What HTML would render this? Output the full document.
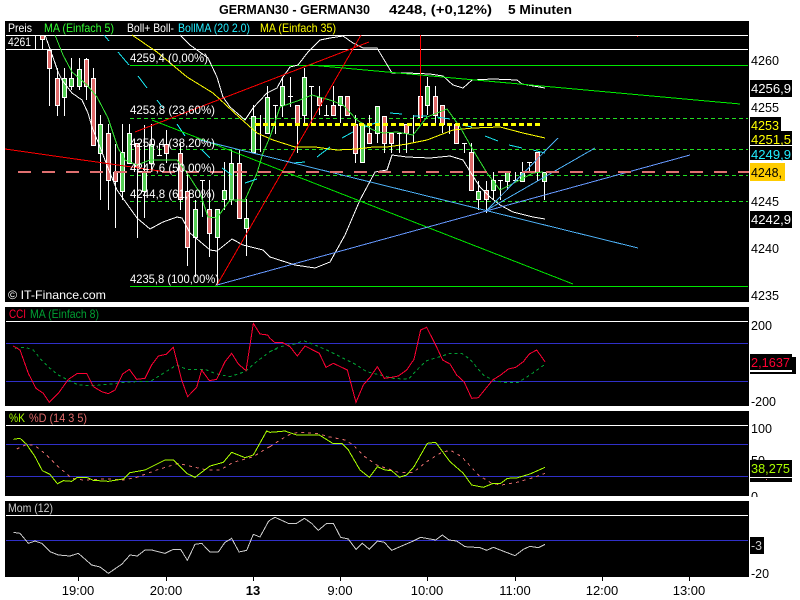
<!DOCTYPE html>
<html><head><meta charset="utf-8"><title>GERMAN30</title>
<style>
html,body{margin:0;padding:0;background:#fff;width:800px;height:600px;overflow:hidden}
svg{display:block}
text{font-family:"Liberation Sans",sans-serif;font-size:12px;white-space:pre}
polyline,path,line,rect{shape-rendering:crispEdges}
polyline{fill:none;vector-effect:non-scaling-stroke}
</style></head><body>
<svg width="800" height="600" viewBox="0 0 800 600" xmlns="http://www.w3.org/2000/svg">
<rect width="800" height="600" fill="#fff"/>
<text x="219" y="14" font-weight="bold" style="font-size:13px" textLength="151" lengthAdjust="spacingAndGlyphs">GERMAN30 - GERMAN30</text>
<text x="389" y="14" font-weight="bold" style="font-size:13px" textLength="103" lengthAdjust="spacingAndGlyphs">4248, (+0,12%)</text>
<text x="508" y="14" font-weight="bold" style="font-size:13px" textLength="64" lengthAdjust="spacingAndGlyphs">5 Minuten</text>

<!-- panels -->
<rect x="5" y="21" width="744" height="281" fill="#000"/>
<rect x="5" y="307" width="744" height="99" fill="#000"/>
<rect x="5" y="411" width="744" height="85" fill="#000"/>
<rect x="5" y="501" width="744" height="76" fill="#000"/>

<!-- main frame lines -->
<path d="M6 35.5H748M6 49.5H748M35.5 35V49M6 321.5H748M6 425.5H748M6 515.5H748" stroke="#fff" fill="none"/>
<path d="M6 343.5H748M6 381.5H748M6 444.5H748M6 476.5H748M6 540.5H748" stroke="#3030c8" fill="none"/>

<!-- fib lines -->
<path d="M130 65.5H748M130 286.5H748" stroke="#00e600" fill="none"/>
<path d="M130 118.5H748M130 149.5H748M130 175.5H748M130 201.5H748" stroke="#22dd22" stroke-dasharray="4 3" fill="none"/>

<!-- wicks -->
<path stroke="#fff" fill="none" d="M42.5 35V49M49.5 49V106M57.5 68V116M64.5 68V116M71.5 58V90M79.5 58V90M86.5 58V100M93.5 68V145M100.5 115V200M108.5 124V210M115.5 144V228M122.5 124V200M129.5 124V163M137.5 143V238M144.5 125V218M151.5 124V170M159.5 143V155M166.5 130V163M180.5 143V210M187.5 172V266M195.5 200V277M202.5 180V217M209.5 180V257M217.5 209V284M224.5 162V210M231.5 150V205M239.5 150V218M246.5 199V256M253.5 105V152M260.5 115V152M267.5 86V134M275.5 105V134M282.5 77V117M290.5 77V107M297.5 115V153M304.5 68V123M311.5 86V123M319.5 86V115M326.5 105V115M333.5 86V115M340.5 96V123M347.5 96V115M355.5 115V163M362.5 124V163M369.5 115V143M377.5 115V143M384.5 143V153M391.5 133V153M399.5 133V153M406.5 124V153M413.5 115V143M427.5 77V115M435.5 86V124M442.5 105V133M449.5 124V134M456.5 124V143M464.5 143V153M471.5 143V190M478.5 181V210M486.5 181V213M493.5 172V200M500.5 180V200M507.5 172V190M515.5 172V181M522.5 162V181M529.5 162V172M537.5 152V181M544.5 172V200
M157 155.5H162M200 180.5H205M273 105.5H278M288 96.5H293M309 86.5H314M324 115.5H329M397 133.5H402M447 124.5H452M462 143.5H467M498 180.5H503M513 180.5H518M527 162.5H532"/>
<!-- red bodies -->
<g fill="#e06a6a" stroke="#fff">
<rect x="40.5" y="35.5" width="4" height="4"/><rect x="47.5" y="50.5" width="4" height="18"/><rect x="55.5" y="78.5" width="4" height="27"/><rect x="84.5" y="59.5" width="4" height="27"/><rect x="91.5" y="78.5" width="4" height="67"/><rect x="106.5" y="133.5" width="4" height="47"/><rect x="113.5" y="172.5" width="4" height="9"/><rect x="135.5" y="143.5" width="4" height="24"/><rect x="164.5" y="144.5" width="4" height="9"/><rect x="178.5" y="153.5" width="4" height="46"/><rect x="185.5" y="191.5" width="4" height="56"/><rect x="207.5" y="209.5" width="4" height="24"/><rect x="237.5" y="163.5" width="4" height="55"/><rect x="295.5" y="105.5" width="4" height="18"/><rect x="317.5" y="97.5" width="4" height="8"/><rect x="331.5" y="105.5" width="4" height="10"/><rect x="345.5" y="96.5" width="4" height="19"/><rect x="353.5" y="124.5" width="4" height="29"/><rect x="367.5" y="133.5" width="4" height="10"/><rect x="382.5" y="116.5" width="4" height="27"/><rect x="389.5" y="133.5" width="4" height="10"/><rect x="404.5" y="124.5" width="4" height="9"/><rect x="418.5" y="96.5" width="4" height="21"/><rect x="433.5" y="96.5" width="4" height="19"/><rect x="440.5" y="105.5" width="4" height="19"/><rect x="454.5" y="124.5" width="4" height="19"/><rect x="469.5" y="152.5" width="4" height="38"/><rect x="484.5" y="190.5" width="4" height="9"/><rect x="535.5" y="152.5" width="4" height="20"/>
</g>
<!-- green bodies -->
<g fill="#55d055" stroke="#fff">
<rect x="62.5" y="78.5" width="4" height="19"/><rect x="69.5" y="78.5" width="4" height="8"/><rect x="77.5" y="69.5" width="4" height="17"/><rect x="98.5" y="124.5" width="4" height="29"/><rect x="120.5" y="152.5" width="4" height="39"/><rect x="127.5" y="133.5" width="4" height="30"/><rect x="142.5" y="172.5" width="4" height="19"/><rect x="149.5" y="144.5" width="4" height="19"/><rect x="193.5" y="209.5" width="4" height="28"/><rect x="215.5" y="209.5" width="4" height="28"/><rect x="222.5" y="190.5" width="4" height="9"/><rect x="229.5" y="163.5" width="4" height="36"/><rect x="244.5" y="218.5" width="4" height="10"/><rect x="251.5" y="116.5" width="4" height="36"/><rect x="265.5" y="97.5" width="4" height="36"/><rect x="280.5" y="86.5" width="4" height="19"/><rect x="302.5" y="77.5" width="4" height="38"/><rect x="338.5" y="96.5" width="4" height="9"/><rect x="360.5" y="124.5" width="4" height="38"/><rect x="375.5" y="106.5" width="4" height="27"/><rect x="425.5" y="86.5" width="4" height="19"/><rect x="476.5" y="191.5" width="4" height="8"/><rect x="491.5" y="180.5" width="4" height="10"/><rect x="505.5" y="172.5" width="4" height="9"/><rect x="520.5" y="172.5" width="4" height="9"/><rect x="542.5" y="172.5" width="4" height="9"/>
</g>

<!-- bollinger -->
<polyline stroke="#fff" points="180,35 190,45 208,58 217,77 223,97 230,107 245,120 253,108 267,93 277,88 283,77 290,67 298,65 308,52 320,40 330,38 343,36 353,43 363,48 377,48 383,58 392,73 407,73 430,74 443,76 453,85 463,88 472,80 493,79 517,80 522,84 545,88"/>
<polyline stroke="#fff" points="45,35 55,63 58,72 62,80 72,93 82,100 88,113 92,127 100,147 110,173 117,190 137,218 150,229 163,222 177,217 182,218 190,233 210,250 217,251 232,239 243,245 263,250 270,257 295,265 315,268 330,262 345,235 360,200 375,172 387,170 392,155 407,157 430,158 450,156 463,160 471,173 480,187 490,197 500,205 513,212 533,217 545,219"/>
<!-- MA 35 yellow -->
<polyline stroke="#ffff00" points="132,35 157,52 187,77 213,93 240,118 257,133 273,140 295,147 315,147 337,150 357,149 373,147 387,147 407,144 427,140 453,130 473,128 500,127 523,133 545,138"/>
<!-- MA 5 green -->
<polyline stroke="#33e633" points="55,35 63,55 72,72 87,85 97,97 108,118 118,148 125,160 137,165 150,160 165,160 177,160 187,173 200,193 208,217 217,218 230,200 245,200 257,173 263,153 270,137 280,107 300,100 312,95 330,100 343,105 357,120 373,130 383,133 397,132 413,135 427,117 447,109 460,127 473,150 487,173 500,190 520,180 533,173 543,172"/>
<!-- BollMA cyan dashes -->
<path stroke="#19e6f0" fill="none" d="M104 35L109 41M118 52L129 65M138 76L147 88M157 100L163 108M177 124L185 136M202 150L210 158M222 168L232 175M245 183L257 179M293 163L305 162M317 157L330 147M342 138L353 132M365 127L378 122M390 113L402 114M413 116L427 116M437 117L450 119M462 125L472 127M485 136L498 141M509 145L522 148M533 150L545 153"/>

<!-- trendlines -->
<line x1="217" y1="285" x2="361" y2="35" stroke="#ff0000"/>
<line x1="135" y1="132" x2="369" y2="42" stroke="#ff0000"/>
<line x1="5" y1="149" x2="167" y2="172" stroke="#ff0000"/>
<path d="M420.5 35V122" stroke="#ff0000" fill="none"/>
<rect x="637" y="36" width="1" height="1" fill="#ff0000"/>
<line x1="310" y1="65" x2="740" y2="104" stroke="#00f000"/>
<line x1="152" y1="120" x2="573" y2="284" stroke="#00e600"/>
<line x1="200" y1="140" x2="638" y2="248" stroke="#4db0f5"/>
<line x1="217" y1="285" x2="690" y2="155" stroke="#6699ff"/>
<line x1="487" y1="210" x2="558" y2="138" stroke="#4db0f5"/>
<line x1="487" y1="210" x2="595" y2="148" stroke="#4db0f5"/>

<!-- dashed levels -->
<path d="M255 124.5H542" stroke="#ffff00" stroke-width="3" stroke-dasharray="5 3" fill="none"/>
<path d="M18 172H749" stroke="#e07070" stroke-width="2" stroke-dasharray="13 11" fill="none"/>

<!-- fib labels -->
<g fill="#fff">
<text x="130" y="62" textLength="78" lengthAdjust="spacingAndGlyphs">4259,4 (0,00%)</text>
<text x="130" y="114" textLength="85" lengthAdjust="spacingAndGlyphs">4253,8 (23,60%)</text>
<text x="130" y="147" textLength="85" lengthAdjust="spacingAndGlyphs">4250,4 (38,20%)</text>
<text x="130" y="172" textLength="85" lengthAdjust="spacingAndGlyphs">4247,6 (50,00%)</text>
<text x="130" y="198" textLength="85" lengthAdjust="spacingAndGlyphs">4244,8 (61,80%)</text>
<text x="130" y="283" textLength="89" lengthAdjust="spacingAndGlyphs">4235,8 (100,00%)</text>
<text x="8" y="299" textLength="98" lengthAdjust="spacingAndGlyphs">© IT-Finance.com</text>
<text x="8" y="46" textLength="23" lengthAdjust="spacingAndGlyphs">4261</text>
<text x="8" y="32" textLength="24" lengthAdjust="spacingAndGlyphs">Preis</text>
<text x="127" y="32" textLength="47" lengthAdjust="spacingAndGlyphs">Boll+ Boll-</text>
</g>
<text x="44" y="32" fill="#33ff33" textLength="70" lengthAdjust="spacingAndGlyphs">MA (Einfach 5)</text>
<text x="178" y="32" fill="#22eeff" textLength="72" lengthAdjust="spacingAndGlyphs">BollMA (20 2.0)</text>
<text x="260" y="32" fill="#ffff00" textLength="76" lengthAdjust="spacingAndGlyphs">MA (Einfach 35)</text>

<!-- CCI -->
<text x="9" y="318" fill="#ff0033" textLength="17" lengthAdjust="spacingAndGlyphs">CCI</text>
<text x="30" y="318" fill="#00a033" textLength="69" lengthAdjust="spacingAndGlyphs">MA (Einfach 8)</text>
<g transform="translate(0,300) scale(.33333)">
<polyline stroke="#00a033" stroke-dasharray="3 3" points="45,145 75,142 100,150 120,175 150,205 175,225 205,240 235,255 280,257 325,253 370,247 410,245 450,245 490,220 530,195 560,208 615,208 650,222 690,230 735,215 770,185 810,155 840,142"/>
<polyline stroke="#ff0033" points="40,138 60,150 85,220 108,265 130,280 148,307 175,280 205,238 232,220 260,220 280,260 305,275 325,281 345,270 368,222 388,208 410,238 435,235 455,195 475,168 498,163 520,142 545,240 563,290 590,262 605,210 628,242 650,238 675,185 695,160 715,192 738,212 760,70 780,102 803,105 810,115"/>
</g>
<g transform="translate(270,300) scale(.33333)">
<polyline stroke="#00a033" stroke-dasharray="3 3" points="0,155 30,140 75,132 100,122 130,133 170,150 210,170 260,195 290,215 330,225 370,235 415,238 450,200 470,182 510,170 540,160 575,160 600,178 640,225 668,240 700,247 745,247 780,225 825,193"/>
<polyline stroke="#ff0033" points="0,115 15,128 38,128 60,140 82,168 105,138 148,160 168,202 190,190 232,210 258,307 280,255 300,232 322,200 343,235 365,232 385,228 410,210 432,178 452,90 470,82 497,135 518,180 540,192 560,225 582,245 605,295 625,293 668,240 692,225 715,207 737,202 760,185 778,162 800,150 825,185"/>
</g>

<!-- Stoch -->
<text x="9" y="422" fill="#aaff00" textLength="16" lengthAdjust="spacingAndGlyphs">%K</text>
<text x="29" y="422" fill="#e06a6a" textLength="58" lengthAdjust="spacingAndGlyphs">%D (14 3 5)</text>
<g transform="translate(0,405) scale(.33333)">
<polyline stroke="#e06a6a" stroke-dasharray="3 4" points="50,132 80,118 105,122 140,150 175,185 215,220 250,225 320,222 370,225 410,217 470,195 535,175 590,188 620,195 660,195 700,172 760,155 800,130 810,125"/>
<polyline stroke="#aaff00" points="40,103 60,100 80,118 105,155 127,197 150,208 172,236 190,227 215,229 232,217 260,217 280,226 325,229 370,222 390,203 435,195 495,165 520,165 560,205 585,217 630,183 670,172 695,142 735,158 760,150 800,78 810,82"/>
</g>
<g transform="translate(270,405) scale(.33333)">
<polyline stroke="#e06a6a" stroke-dasharray="3 4" points="0,125 30,105 60,88 85,82 140,85 175,95 225,105 250,120 280,152 320,180 385,202 430,202 470,170 510,145 540,135 575,155 625,210 665,235 695,240 740,232 790,218 825,205"/>
<polyline stroke="#aaff00" points="0,82 25,80 45,78 65,85 80,90 148,90 188,115 215,115 235,135 270,195 298,217 322,185 345,195 365,197 388,217 410,210 432,185 472,115 497,112 540,170 580,205 605,240 640,247 670,235 692,235 712,220 740,219 780,207 825,187"/>
</g>

<!-- Mom -->
<text x="8" y="512" fill="#ccc" textLength="45" lengthAdjust="spacingAndGlyphs">Mom (12)</text>
<g transform="translate(0,405) scale(.33333)">
<polyline stroke="#ccc" points="40,382 60,385 85,415 105,408 125,415 150,440 175,450 210,453 235,445 275,480 300,486 325,505 365,478 390,450 412,453 435,435 455,435 495,445 520,433 542,433 562,466 585,418 605,415 630,441 655,441 675,412 695,400 717,441 740,436 760,388 780,396 805,350 810,345"/>
</g>
<g transform="translate(270,405) scale(.33333)">
<polyline stroke="#ccc" points="0,345 15,337 55,355 80,355 103,340 125,355 145,376 170,355 190,355 212,397 235,402 258,433 277,415 298,433 322,408 343,412 365,436 430,408 452,397 497,405 517,390 537,405 560,408 585,425 630,428 650,436 670,427 735,452 760,433 780,424 805,428 825,418"/>
</g>

<!-- right ticks -->
<path stroke="#000" fill="none" d="M743 59.5H749M746 82.5H749M743 106.5H749M746 129.5H749M743 153.5H749M746 177.5H749M743 200.5H749M746 223.5H749M743 247.5H749M746 271.5H749M743 294.5H749M743 324.5H749M743 362.5H749M743 400.5H749M743 426.5H749M743 460.5H749M743 493.5H749M745 526.5H749M745 555.5H749M743 572.5H749"/>
<g>
<text x="751" y="65" style="font-size:13px" textLength="28" lengthAdjust="spacingAndGlyphs">4260</text>
<text x="751" y="112" style="font-size:13px" textLength="28" lengthAdjust="spacingAndGlyphs">4255</text>
<text x="751" y="206" style="font-size:13px" textLength="28" lengthAdjust="spacingAndGlyphs">4245</text>
<text x="751" y="253" style="font-size:13px" textLength="28" lengthAdjust="spacingAndGlyphs">4240</text>
<text x="751" y="300" style="font-size:13px" textLength="28" lengthAdjust="spacingAndGlyphs">4235</text>
<text x="751" y="330" style="font-size:13px" textLength="21" lengthAdjust="spacingAndGlyphs">200</text>
<text x="751" y="406" style="font-size:13px" textLength="25" lengthAdjust="spacingAndGlyphs">-200</text>
<text x="751" y="433" style="font-size:13px" textLength="21" lengthAdjust="spacingAndGlyphs">100</text>
<text x="751" y="465" style="font-size:13px" textLength="14" lengthAdjust="spacingAndGlyphs">50</text>
<text x="751" y="578" style="font-size:13px" textLength="18" lengthAdjust="spacingAndGlyphs">-20</text>
<text x="751" y="501" style="font-size:13px" textLength="7" lengthAdjust="spacingAndGlyphs">0</text>
</g>
<rect x="750" y="497" width="50" height="8" fill="#fff"/>

<!-- value boxes -->
<rect x="750" y="80" width="42" height="17" fill="#000"/>
<text x="751" y="93" fill="#fff" style="font-size:13px" textLength="40" lengthAdjust="spacingAndGlyphs">4256,9</text>
<rect x="750" y="117" width="31" height="14" fill="#000"/>
<text x="751" y="130" fill="#ffff00" style="font-size:13px" textLength="28" lengthAdjust="spacingAndGlyphs">4253</text>
<rect x="750" y="131" width="42" height="14" fill="#000"/>
<text x="751" y="144" fill="#ffff00" style="font-size:13px" textLength="40" lengthAdjust="spacingAndGlyphs">4251,5</text>
<rect x="750" y="146" width="42" height="14" fill="#000"/>
<text x="751" y="159" fill="#22eeff" style="font-size:13px" textLength="40" lengthAdjust="spacingAndGlyphs">4249,9</text>
<rect x="750" y="163" width="35" height="18" fill="#ffcc00"/>
<text x="751" y="177" fill="#000" style="font-size:13px" textLength="31" lengthAdjust="spacingAndGlyphs">4248,</text>
<rect x="750" y="211" width="42" height="17" fill="#000"/>
<text x="751" y="224" fill="#fff" style="font-size:13px" textLength="40" lengthAdjust="spacingAndGlyphs">4242,9</text>
<rect x="750" y="357" width="46" height="17" fill="#000"/>
<rect x="750" y="357" width="42" height="15" fill="#fff"/>
<rect x="750" y="354" width="42" height="16" fill="#000"/>
<text x="751" y="367" fill="#ff0033" style="font-size:13px" textLength="39" lengthAdjust="spacingAndGlyphs">2,1637</text>
<rect x="750" y="478" width="42" height="4" fill="#000"/>
<rect x="766" y="479" width="1" height="1" fill="#e06a6a"/>
<rect x="750" y="460" width="42" height="17" fill="#000"/>
<text x="751" y="473" fill="#aaff00" style="font-size:13px" textLength="39" lengthAdjust="spacingAndGlyphs">38,275</text>
<rect x="750" y="537" width="14" height="17" fill="#000"/>
<text x="751" y="550" fill="#ccc" style="font-size:13px" textLength="11" lengthAdjust="spacingAndGlyphs">-3</text>

<!-- x axis -->
<path stroke="#000" fill="none" d="M78.5 577V581M166.5 577V581M253.5 577V581M340.5 577V581M427.5 577V581M515.5 577V581M602.5 577V581M689.5 577V581"/>
<g text-anchor="middle">
<text x="78" y="595" style="font-size:13px">19:00</text>
<text x="166" y="595" style="font-size:13px">20:00</text>
<text x="253" y="595" font-weight="bold" style="font-size:13px">13</text>
<text x="340" y="595" style="font-size:13px">9:00</text>
<text x="427" y="595" style="font-size:13px">10:00</text>
<text x="515" y="595" style="font-size:13px">11:00</text>
<text x="602" y="595" style="font-size:13px">12:00</text>
<text x="689" y="595" style="font-size:13px">13:00</text>
</g>
</svg>
</body></html>
